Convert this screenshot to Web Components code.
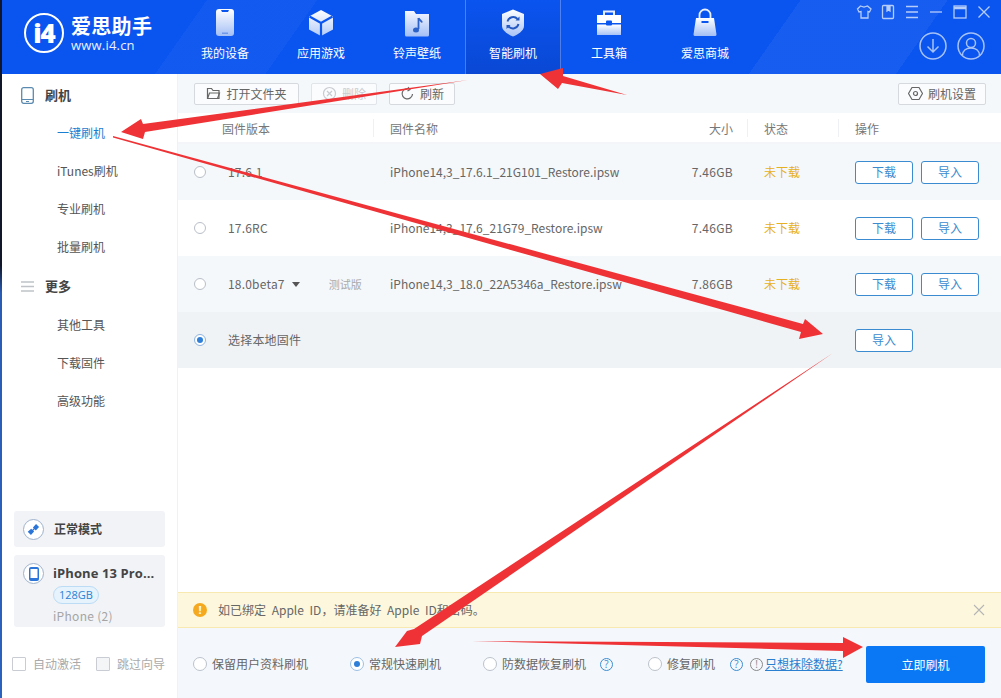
<!DOCTYPE html>
<html lang="zh"><head><meta charset="utf-8"><title>爱思助手</title>
<style>
html,body{margin:0;padding:0;width:1001px;height:698px;overflow:hidden;background:#fff;font-family:"Noto Sans CJK SC","Noto Sans",sans-serif;font-size:12px;color:#555}
</style></head><body>
<i4-app>
  <i4-header slot="header">
    <i4-nav label="我的设备"><svg viewBox="0 0 30 30" width="30" height="30"><defs><linearGradient id="g1" x1="0" y1="0" x2="0" y2="1"><stop offset="0" stop-color="#fff"/><stop offset="1" stop-color="#a4bff6"/></linearGradient></defs><rect x="6" y="1" width="18" height="27" rx="3" fill="url(#g1)"/><path d="M11 2h8l-1 2h-6z" fill="#0a54ef"/><rect x="12" y="24.500" width="6" height="1.500" fill="#6f97ea"/></svg></i4-nav>
    <i4-nav label="应用游戏"><svg viewBox="0 0 30 30" width="30" height="30"><defs><linearGradient id="g2" x1="0" y1="0" x2="0" y2="1"><stop offset="0" stop-color="#fff"/><stop offset="1" stop-color="#b4ccf8"/></linearGradient></defs><path d="M15 2l12 6.500v13L15 28 3 21.500v-13z" fill="url(#g2)"/><path d="M3.500 8.500L15 15l11.500-6.500M15 15v13" stroke="#0a54ef" stroke-width="2.200" fill="none"/></svg></i4-nav>
    <i4-nav label="铃声壁纸"><svg viewBox="0 0 30 30" width="30" height="30"><defs><linearGradient id="g3" x1="0" y1="0" x2="0" y2="1"><stop offset="0" stop-color="#f4f8ff"/><stop offset="1" stop-color="#a4bff6"/></linearGradient></defs><path d="M3 3h9l2 3h13v21a1.500 1.500 0 0 1-1.500 1.500h-21A1.500 1.500 0 0 1 3 27z" fill="url(#g3)"/><path d="M16.500 10v11" stroke="#2d62c8" stroke-width="1.800"/><ellipse cx="14" cy="22" rx="3" ry="2.500" fill="#2d62c8"/><path d="M16.500 10c.5 2 3 2.500 3.500 4.500" stroke="#2d62c8" stroke-width="1.800" fill="none"/></svg></i4-nav>
    <i4-nav label="智能刷机" active><svg viewBox="0 0 30 30" width="30" height="30"><defs><linearGradient id="g4" x1="0" y1="0" x2="0" y2="1"><stop offset="0" stop-color="#fff"/><stop offset="1" stop-color="#a9c3f6"/></linearGradient></defs><path d="M15 1.500l11 4.500v12c0 4.500-6 8.500-11 10.500C10 26.500 4 22.500 4 18V6z" fill="url(#g4)"/><path d="M9.500 13.500a5.800 5.800 0 0 1 10-2.500M20.500 16a5.800 5.800 0 0 1-10 2.500" stroke="#2458c0" stroke-width="1.900" fill="none"/><path d="M21.500 8.500v4h-4zM8.500 21v-4h4z" fill="#2458c0"/></svg></i4-nav>
    <i4-nav label="工具箱"><svg viewBox="0 0 30 30" width="30" height="30"><defs><linearGradient id="g5" x1="0" y1="0" x2="0" y2="1"><stop offset="0" stop-color="#fff"/><stop offset="1" stop-color="#a9c3f6"/></linearGradient></defs><path d="M10 7V3.500h10V7" stroke="#e4ecfd" stroke-width="2" fill="none"/><path d="M3 7h24v8H3z" fill="#fff"/><path d="M3 16.500h24V27H3z" fill="url(#g5)"/><rect x="12" y="12.500" width="6" height="5" rx="1" fill="#0a54ef"/></svg></i4-nav>
    <i4-nav label="爱思商城"><svg viewBox="0 0 30 30" width="30" height="30"><defs><linearGradient id="g6" x1="0" y1="0" x2="0" y2="1"><stop offset="0" stop-color="#fff"/><stop offset="1" stop-color="#a4bff6"/></linearGradient></defs><path d="M9.500 11V7a5.500 5.500 0 0 1 11 0v4" stroke="#e8effd" stroke-width="1.800" fill="none"/><path d="M6 10h18l2.500 16.500a1.500 1.500 0 0 1-1.500 1.500H5a1.500 1.500 0 0 1-1.500-1.500z" fill="url(#g6)"/><rect x="11.500" y="13" width="7" height="2" fill="#0a54ef"/></svg></i4-nav>
  </i4-header>
  <i4-sidebar slot="sidebar"></i4-sidebar>
  <i4-main slot="main"></i4-main>
  <i4-arrows slot="overlay"></i4-arrows>
</i4-app>
<script>
const define=(name,html,setup)=>customElements.define(name,class extends HTMLElement{
  connectedCallback(){ if(this.shadowRoot)return; const r=this.attachShadow({mode:'open'}); r.innerHTML=typeof html==='function'?html(this):html; if(setup)setup(this,r);}
});
const FONT='"Noto Sans CJK SC","Noto Sans",sans-serif';

define('i4-app',`<style>
:host{display:block;position:relative;width:1001px;height:698px;overflow:hidden;background:linear-gradient(#11162a 0 38%,#2a5cb4 42%,#2b62bd 100%)}
.win{position:absolute;inset:0 0 0 2px;display:grid;grid-template-rows:74px 1fr;grid-template-columns:176px 1fr;background:#fff}
::slotted([slot=header]){grid-column:1/3}
</style><div class="win"><slot name="header"></slot><slot name="sidebar"></slot><slot name="main"></slot></div><slot name="overlay"></slot>`);

define('i4-header',`<style>
:host{display:flex;height:74px;color:#fff;background:
 linear-gradient(125deg,transparent 0 19.5%,rgba(255,255,255,.035) 19.5% 30%,transparent 30% 76%,rgba(255,255,255,.05) 76% 90%,transparent 90%),
 #0a54ef}
.logo{width:175px;flex:none;display:flex;align-items:center;gap:8px;padding:0 0 0 22px;box-sizing:border-box;height:66px}
.mark{width:36px;height:36px;flex:none;border:2px solid #fff;border-radius:50%;display:flex;align-items:center;justify-content:center;font:800 26px/1 "Open Sans",sans-serif;letter-spacing:-1px}
.t{display:flex;flex-direction:column;margin-left:-1px}
.n{font:700 20px/24px ${FONT};letter-spacing:.3px;white-space:nowrap;margin-top:1px}
.u{font:400 13px/15px "Open Sans",sans-serif;opacity:.92;letter-spacing:.2px}
nav{display:flex}
.ctl{margin-left:auto;width:136px;flex:none;display:flex;flex-direction:column;align-items:flex-end;padding:3px 7px 0 0;box-sizing:border-box}
.top{display:flex;gap:4px;height:18px}
.top svg{width:20px;height:18px;fill:none;stroke:#b6cdfa;stroke-width:1.300}
.big{display:flex;gap:10px;margin:11px 9px 0 0}
.big svg{width:28px;height:28px;fill:none;stroke:#a7c2f7;stroke-width:1.500}
</style>
<div class="logo"><div class="mark">i4</div><div class="t"><span class="n">爱思助手</span><span class="u">www.i4.cn</span></div></div>
<nav><slot></slot></nav>
<div class="ctl"><div class="top">
<svg viewBox="0 0 20 18"><path d="M6.500 3l3.500 1 3.500-1 3.500 3-1.500 3-1.500-.5V15h-7V8.500L5 9 3.500 6z"/></svg>
<svg viewBox="0 0 20 18"><rect x="4.500" y="2.500" width="11" height="13" rx="1"/><path d="M9 3v5l1.500-1L12 8V3z" fill="#b6cdfa"/></svg>
<svg viewBox="0 0 20 18"><path d="M4 3.500h12M4 9h12M4 14.500h12"/></svg>
<svg viewBox="0 0 20 18"><path d="M4 9h12"/></svg>
<svg viewBox="0 0 20 18"><rect x="4" y="3" width="12" height="12"/><path d="M4 5h12" stroke-width="2.500"/></svg>
<svg viewBox="0 0 20 18"><path d="M4.500 3.500l11 11M15.500 3.500l-11 11"/></svg>
</div><div class="big">
<svg viewBox="0 0 28 28"><circle cx="14" cy="14" r="13"/><path d="M14 7v13M8.500 14.500L14 20l5.500-5.500"/></svg>
<svg viewBox="0 0 28 28"><circle cx="14" cy="14" r="13"/><circle cx="14" cy="11" r="4.500"/><path d="M5.500 23.500c0-5 4-7.500 8.500-7.500s8.500 2.500 8.500 7.500"/></svg>
</div></div>`);

define('i4-nav',h=>`<style>
:host{display:flex;flex-direction:column;align-items:center;width:96px;height:74px;box-sizing:border-box;padding-top:8px;font:12px/16px ${FONT};color:#fff;flex:none}
:host([active]){background:linear-gradient(#0a54ef,#0a48d4);box-shadow:inset 1px 0 rgba(255,255,255,.28),inset -1px 0 rgba(255,255,255,.28)}
span{margin-top:7px}
::slotted(svg){display:block}
</style><slot></slot><span>${h.getAttribute('label')}</span>`);

define('i4-side-item',h=>`<style>
:host{display:flex;align-items:center;height:38px;padding-left:55px;font:12px/16px ${FONT};color:#555}
:host([on]){color:#1c7ed0}
</style><slot></slot>`);

define('i4-side-head',h=>`<style>
:host{display:flex;align-items:center;height:38px;padding-left:19px;gap:11px;font:700 13px/16px ${FONT};color:#444}
::slotted(svg){width:13px;height:17px;flex:none}
</style><slot name="icon"></slot><slot></slot>`);

define('i4-mode-card',`<style>
:host{display:flex;align-items:center;gap:10px;height:36px;margin:0 12px;padding-left:9px;background:#f1f3f7;border-radius:3px;font:700 12px/16px ${FONT};color:#444}
.c{width:19px;height:19px;border:1px solid #9fb2cc;border-radius:50%;background:#fff;display:flex;align-items:center;justify-content:center}
</style><div class="c"><svg width="15" height="15" viewBox="0 0 13 13"><path d="M1.500 8.500L4.500 5.800 7 8.300 4.300 11.300zM6 4.700L8.700 1.800l2.600 2.500-2.800 3z" fill="#2b74d8"/><path d="M5 8l3-3" stroke="#2b74d8"/></svg></div><slot></slot>`);

define('i4-device-card',`<style>
:host{display:grid;grid-template-columns:20px 1fr;column-gap:10px;height:72px;box-sizing:border-box;margin:8px 12px 0;padding:8px 0 0 9px;background:#f1f3f7;border-radius:3px}
.c{width:19px;height:19px;border:1px solid #9fb2cc;border-radius:50%;background:#fff;display:flex;align-items:center;justify-content:center}
.b{font:700 13px/20px "Open Sans",sans-serif;color:#444;white-space:nowrap;letter-spacing:.1px}
.pill{display:block;width:46px;height:18px;box-sizing:border-box;margin-top:3px;border:1px solid #bcdcf6;background:#e6f2fc;border-radius:9px;text-align:center;font:11px/16px "Open Sans",sans-serif;color:#2a82d4}
.s{font:12px/14px ${FONT};color:#a5a5a5;margin-top:5px;letter-spacing:.3px}
</style><div class="c"><svg width="10" height="14" viewBox="0 0 10 14"><rect width="10" height="14" rx="2" fill="#2b74d8"/><rect x="1.500" y="2" width="7" height="9" fill="#fff"/></svg></div>
<div><div class="b">iPhone 13 Pro...</div><div class="pill">128GB</div><div class="s">iPhone (2)</div></div>`);

define('i4-check',h=>`<style>
:host{display:flex;align-items:center;gap:7px;font:12px/16px ${FONT};color:#aaa;white-space:nowrap}
i{width:12px;height:12px;border:1px solid #c9ccd2;border-radius:1px;background:${h.hasAttribute('alt')?'#f4f5f7':'#fff'}}
</style><i></i><slot></slot>`);

define('i4-sidebar',`<style>
:host{display:flex;flex-direction:column;width:176px;box-sizing:border-box;border-right:1px solid #eef1f5;background:#fff;height:624px;padding-top:2px}
.sp{flex:1}
.more{margin:1px 0}
.checks{display:flex;gap:15px;padding:0 0 26px 10px;margin-top:29px}
</style>
<i4-side-head><svg slot="icon" viewBox="0 0 13 17"><rect x=".7" y=".7" width="11.600" height="15.600" rx="2" fill="none" stroke="#5a8ab0" stroke-width="1.300"/><path d="M1 12.500h11M5 14.500h3" stroke="#5a8ab0" stroke-width="1.100"/></svg>刷机</i4-side-head>
<i4-side-item on>一键刷机</i4-side-item>
<i4-side-item>iTunes刷机</i4-side-item>
<i4-side-item>专业刷机</i4-side-item>
<i4-side-item>批量刷机</i4-side-item>
<i4-side-head class="more"><svg slot="icon" viewBox="0 0 13 17"><path d="M0 4h13M0 8.500h13M0 13h13" stroke="#bfc3c8" stroke-width="1.300"/></svg>更多</i4-side-head>
<i4-side-item>其他工具</i4-side-item>
<i4-side-item>下载固件</i4-side-item>
<i4-side-item>高级功能</i4-side-item>
<div class="sp"></div>
<i4-mode-card>正常模式</i4-mode-card>
<i4-device-card></i4-device-card>
<div class="checks"><i4-check>自动激活</i4-check><i4-check alt>跳过向导</i4-check></div>`);

define('i4-btn',h=>`<style>
:host{display:inline-flex;align-items:center;justify-content:center;gap:5px;height:22px;box-sizing:border-box;border:1px solid #d6d9de;border-radius:2px;background:#fbfcfd;font:12px/16px ${FONT};color:#666;white-space:nowrap}
:host([off]){color:#c8ccd2;border-color:#e1e4e8}
:host([blue]){width:58px;height:23px;border:1px solid #3b8bd0;border-radius:3px;background:#fff;color:#3b8bd0}
::slotted(svg){width:15px;height:15px;flex:none;fill:none;stroke:currentColor;stroke-width:1.200}
</style><slot name="icon"></slot><slot></slot>`);

define('i4-row',h=>{const v=h.getAttribute('ver');return `<style>
:host{display:grid;grid-template-columns:34px 162px 250px 93px 31px 91px 58px 8px 58px;align-items:center;height:56px;padding-left:16px;font:12px/16px ${FONT};color:#666;background:#fff}
:host([tint]){background:#f5f8fb}
:host([sel]){background:#f0f3f6}
.r{width:12px;height:12px;border:1px solid #b9bfc7;border-radius:50%;box-sizing:border-box;background:#fff;display:flex;align-items:center;justify-content:center}
:host([sel]) .r{border-color:#8fb4de}
:host([sel]) .r::after{content:"";width:6px;height:6px;border-radius:50%;background:#2f7ed8}
.v{display:flex;align-items:center;letter-spacing:.2px}
.car{margin-left:7px;width:0;height:0;border:4px solid transparent;border-top:5px solid #555;border-bottom:0}
.tag{margin-left:29px;font-size:11px;color:#aaa;letter-spacing:0}
.size{text-align:right;letter-spacing:.3px}
.st{grid-column:6;color:#e6b022}
.b1{grid-column:7}.b2{grid-column:9}
</style><div class="r"></div><div class="v">${v}${h.hasAttribute('beta')?'<i class="car"></i><span class="tag">测试版</span>':''}</div>
${h.hasAttribute('sel')?'':`<div>${h.getAttribute('name')}</div><div class="size">${h.getAttribute('size')}</div><div class="st">未下载</div><i4-btn blue class="b1">下载</i4-btn><i4-btn blue class="b2">导入</i4-btn>`}
${h.hasAttribute('sel')?'<i4-btn blue class="b1">导入</i4-btn>':''}`});

define('i4-notice',`<style>
:host{display:flex;align-items:center;height:36px;box-sizing:border-box;background:#fdf8dd;border-top:1px solid #f8e9b0;border-bottom:1px solid #f8e9b0;padding:0 16px 0 15px;font:12px/16px ${FONT};color:#666;word-spacing:3px}
.i{width:14px;height:14px;border-radius:50%;background:#f5a91f;color:#fff;font:700 11px/14px "Open Sans",sans-serif;text-align:center;margin-right:11px}
.x{margin-left:auto;width:12px;height:12px}
</style><div class="i">!</div><slot></slot><svg class="x" viewBox="0 0 12 12"><path d="M1 1l10 10M11 1L1 11" stroke="#b5b5b5" stroke-width="1.100"/></svg>`);

define('i4-radio',h=>`<style>
:host{display:inline-flex;align-items:center;gap:5px;font:12px/16px ${FONT};color:#666;white-space:nowrap}
i{width:14px;height:14px;box-sizing:border-box;border:1px solid #bcc2ca;border-radius:50%;background:#fff;display:flex;align-items:center;justify-content:center}
:host([on]) i{border-color:#9dbfe4}
:host([on]) i::after{content:"";width:6px;height:6px;border-radius:50%;background:#2f7ed8}
</style><i></i><slot></slot>`);

define('i4-help',`<style>:host{display:inline-flex;width:13px;height:13px;box-sizing:border-box;border:1px solid #3b8bd0;border-radius:50%;align-items:center;justify-content:center;font:10px/1 "Open Sans",sans-serif;color:#3b8bd0}</style><slot></slot>`);

define('i4-footer',`<style>
:host{display:flex;align-items:center;height:70px;box-sizing:border-box;padding:0 16px 0 15px;background:#f4f8fc}
.sl{display:flex;align-items:center;margin-top:2px}
.link{color:#2a7fd0;text-decoration:underline;font:12px/16px ${FONT}}
.go{margin-left:auto;margin-top:3px;width:119px;height:37px;background:#0a78f5;border-radius:2px;color:#fff;font:12px/37px ${FONT};text-align:center}
</style><div class="sl">
<i4-radio style="width:157px">保留用户资料刷机</i4-radio>
<i4-radio on style="width:133px">常规快速刷机</i4-radio>
<i4-radio style="width:117px">防数据恢复刷机</i4-radio><i4-help style="margin-right:35px">?</i4-help>
<i4-radio style="width:82px">修复刷机</i4-radio><i4-help style="margin-right:7px">?</i4-help><i4-help style="color:#888;border-color:#888;margin-right:2px">!</i4-help><span class="link">只想抹除数据?</span>
</div><div class="go">立即刷机</div>`);

define('i4-main',`<style>
:host{display:flex;flex-direction:column;height:624px;background:#fff;min-width:0}
.bar{display:flex;align-items:center;gap:10px;height:39px;padding:0 15px 0 16px;background:#f5f8fb;flex:none}
.bar i4-btn:nth-child(1){width:105px;margin-right:2px}.bar i4-btn:nth-child(2){width:66px}.bar i4-btn:nth-child(3){width:66px;margin-left:2px}.bar i4-btn:nth-child(4){width:88px;margin-left:auto}
.head{display:grid;grid-template-columns:168px 343px 31px 91px 1fr;height:29px;box-sizing:content-box;align-items:center;padding:0 0 0 44px;font:12px/16px ${FONT};color:#777;background:#fff;border-bottom:2px solid #f3f5f8;flex:none}
.head>div{position:relative;padding-top:2px}
.head>.s::before{content:"";position:absolute;left:-17px;top:0;width:1px;height:18px;background:#eef0f3}
.sp{flex:1}
.list{flex:none}
.gap{display:flex;justify-content:space-between}
</style>
<div class="bar">
<i4-btn><svg slot="icon" viewBox="0 0 15 15"><path d="M1.500 12.500v-10h4l1.500 2h6v8z"/><path d="M1.500 12.500l2-5.500h10l-2 5.500"/></svg>打开文件夹</i4-btn>
<i4-btn off><svg slot="icon" viewBox="0 0 15 15"><circle cx="7.500" cy="7.500" r="6"/><path d="M5 5l5 5M10 5l-5 5"/></svg>删除</i4-btn>
<i4-btn><svg slot="icon" viewBox="0 0 15 15"><path d="M12.500 8a5.200 5.200 0 1 1-3-5"/><path d="M8 1l2 2.500L7.500 5"/></svg>刷新</i4-btn>
<i4-btn><svg slot="icon" viewBox="0 0 15 15"><path d="M4 1.500h7l3.500 6-3.500 6H4L.5 7.500z"/><circle cx="7.500" cy="7.500" r="2"/></svg>刷机设置</i4-btn>
</div>
<div class="head"><div>固件版本</div><div class="gap s"><span>固件名称</span><span>大小</span></div><div></div><div class="s">状态</div><div class="s">操作</div></div>
<div class="list">
<i4-row tint ver="17.6.1" name="iPhone14,3_17.6.1_21G101_Restore.ipsw" size="7.46GB"></i4-row>
<i4-row ver="17.6RC" name="iPhone14,3_17.6_21G79_Restore.ipsw" size="7.46GB"></i4-row>
<i4-row tint beta ver="18.0beta7" name="iPhone14,3_18.0_22A5346a_Restore.ipsw" size="7.86GB"></i4-row>
<i4-row sel ver="选择本地固件"></i4-row>
</div>
<div class="sp"></div>
<i4-notice>如已绑定 Apple ID，请准备好 Apple ID和密码。</i4-notice>
<i4-footer></i4-footer>`);

define('i4-arrows',`<style>:host{position:absolute;inset:0;pointer-events:none;display:block}svg{display:block}</style>
<svg width="1001" height="698" viewBox="0 0 1001 698" fill="#ee3235">
<polygon points="468,80 143,124 141,119 121,132 143,139 145,132"/>
<polygon points="627,95 563,76 563,68 540,74 558,89 562,83"/>
<polygon points="113,136 803,324 805,319 823,334 799,339 801,332 113,137.500"/>
<polygon points="833,353 414,629 407,631 395,647 420,644 422,636"/>
<polygon points="472,641 843,643 843,637 863,647 843,658 843,651"/>
</svg>`);
</script>
</body></html>
